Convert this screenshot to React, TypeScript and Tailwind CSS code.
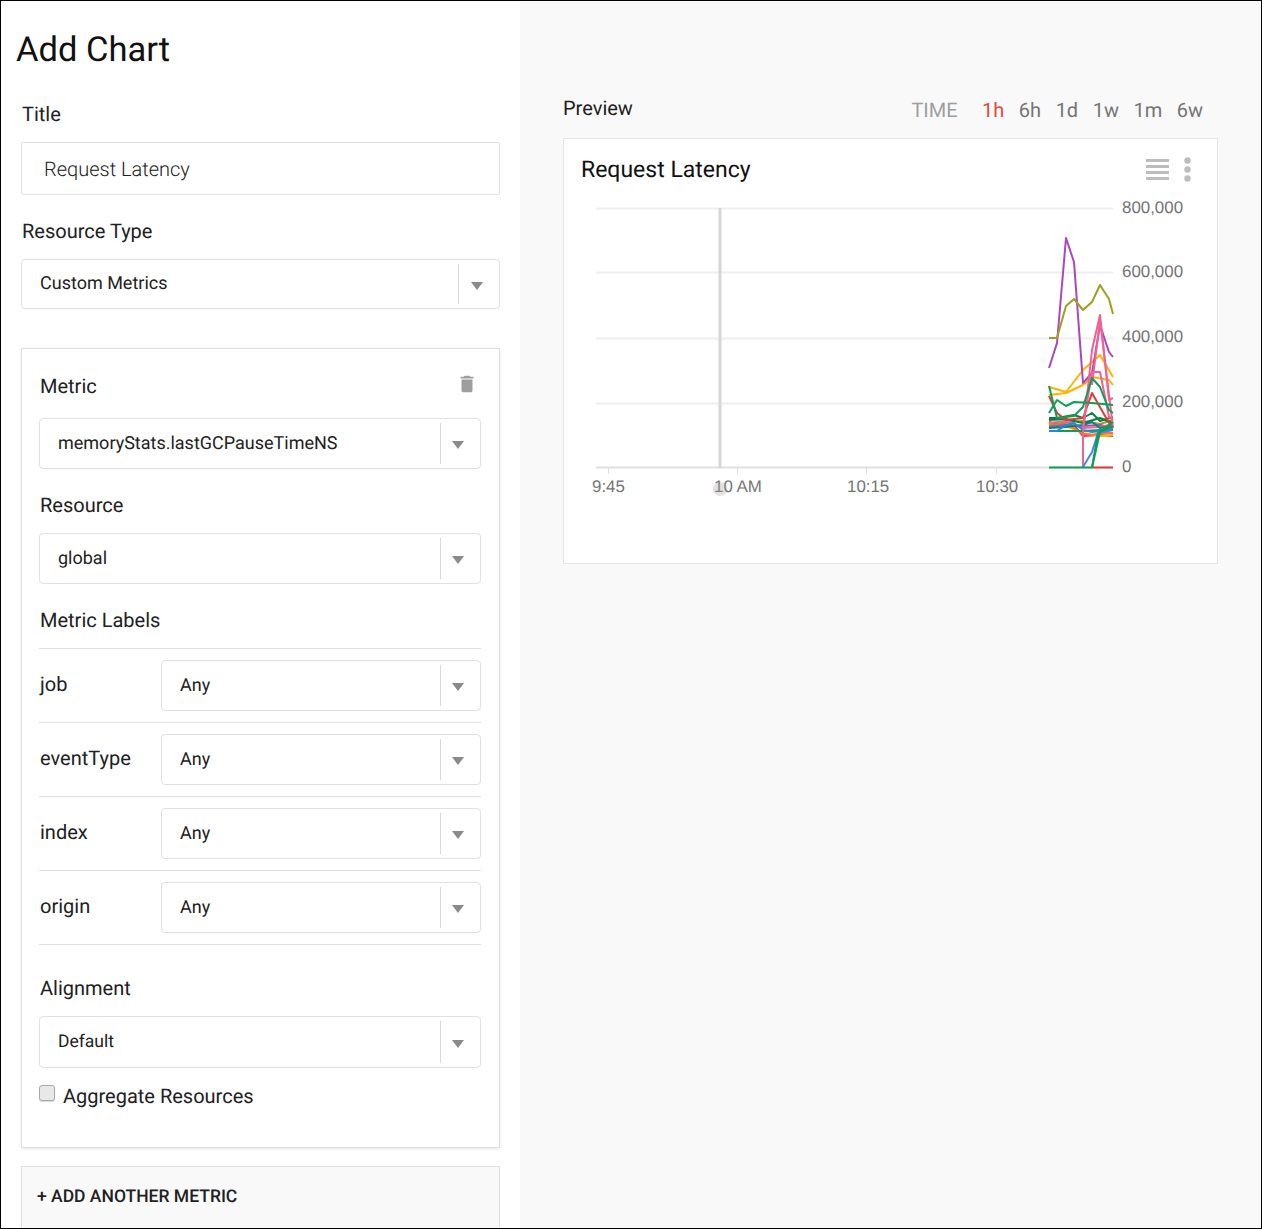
const RANGES = ["1h", "6h", "1d", "1w", "1m", "6w"];
const LABELS = ["job", "eventType", "index", "origin"];

const GRID_Y = [208.5, 272.5, 338.5, 403.5];
const Y_LABELS: [string, number][] = [
  ["800,000", 207],
  ["600,000", 271],
  ["400,000", 336],
  ["200,000", 401],
  ["0", 466],
];
const X_LABELS: [string, number, number][] = [
  ["9:45", 592, 608.5],
  ["10 AM", 714, 737.5],
  ["10:15", 847, 866.5],
  ["10:30", 976, 996.5],
];

// traced by hand from the reference, in page coordinates
const SERIES: [string, string][] = [
  ["#e53935", "1049,422 1057,424 1074,425 1083,436 1100,435 1113,436"],
  ["#ffb300", "1049,424 1066,426 1083,433 1100,436 1113,435"],
  ["#ff7043", "1049,425 1066,424 1074,428 1083,434 1092,435 1100,433 1113,433"],
  ["#9e9d24", "1049,426 1066,422 1083,421 1100,424 1113,420"],
  ["#ab47bc", "1049,427 1066,425 1083,426 1100,425 1113,428"],
  ["#f06292", "1049,423 1066,421 1083,428 1100,427 1113,424"],
  ["#00897b", "1049,428 1066,427 1083,425 1092,422 1100,428 1113,426"],
  ["#0f9d58", "1049,431 1066,431 1083,431 1100,430 1113,429"],
  ["#1e88e5", "1049,431 1057,431 1066,425 1074,423 1083,430 1092,432 1100,431 1113,430"],
  ["#0b8043", "1049,418 1057,418 1074,415 1083,418 1092,413 1100,421 1113,417"],
  ["#0b8043", "1049,420 1066,419 1083,423 1100,418 1113,423"],
  ["#e53935", "1049,396 1057,413 1066,420 1083,418 1092,393 1109,423 1113,426"],
  ["#ffb300", "1049,387 1066,392 1083,370 1100,355 1113,377"],
  ["#ffb300", "1049,395 1066,393 1083,385 1092,377 1109,380 1113,385"],
  ["#ab47bc", "1049,368 1057,343 1066,238 1074,262 1083,383 1092,373 1100,325 1109,352 1113,357"],
  ["#9e9d24", "1049,338 1057,338 1066,306 1074,299 1083,310 1092,302 1100,285 1109,299 1113,314"],
  ["#f06292", "1083,467 1083,433 1092,350 1100,315 1109,400 1113,398"],
  ["#f06292", "1083,427 1092,372 1100,372 1109,417 1113,420"],
  ["#f06292", "1092,385 1100,320 1113,428"],
  ["#0f9d58", "1049,386 1057,418 1074,416 1083,407 1092,378 1100,387 1109,410 1113,413"],
  ["#0f9d58", "1049,413 1057,400 1066,406 1074,402 1092,403 1113,405"],
  ["#4285f4", "1083,467 1092,452 1098,433 1113,430"],
  ["#e53935", "1092,467.5 1113,467.5"],
  ["#0f9d58", "1049,467.5 1092,467.5 1098,433 1113,422"],
  ["#0f9d58", "1092,467.5 1100,432 1113,426"],
];

function Arrow() {
  return (
    <svg width="12" height="8" viewBox="0 0 12 8">
      <path d="M0 0h12L6 8z" fill="#8a8a8a" />
    </svg>
  );
}

function Select({
  value,
  box = "h-[49px] text-[18px]",
  width = "w-full",
  divider = "w-[40px]",
}: {
  value: string;
  box?: string;
  width?: string;
  divider?: string;
}) {
  return (
    <div className={`flex shrink-0 items-stretch rounded-[4px] border border-[#e0e0e0] bg-white ${width}`}>
      <div className={`flex flex-1 items-center pl-[18px] text-[#212121] ${box}`}>{value}</div>
      <div className={`my-[4px] flex items-center justify-center border-l border-[#d8d8d8] pt-[3px] pr-[5px] ${divider}`}>
        <Arrow />
      </div>
    </div>
  );
}

function FieldLabel({ children, className = "" }: { children: string; className?: string }) {
  return <div className={`h-[24px] pl-px text-[20px] leading-[24px] text-[#212121] ${className}`}>{children}</div>;
}

function Chart() {
  return (
    <svg className="mt-[4px] block" width="653" height="373" viewBox="564 190 653 373" fill="none">
      {GRID_Y.map((y) => (
        <line key={y} x1="596" x2="1113" y1={y} y2={y} stroke="#eeeeee" strokeWidth="2" />
      ))}
      <line x1="596" x2="1113" y1="467.5" y2="467.5" stroke="#e0e0e0" strokeWidth="2" />
      {X_LABELS.map(([label, x, tick]) => (
        <g key={label}>
          <line x1={tick} x2={tick} y1="468" y2="474" stroke="#e0e0e0" />
          <text x={x} y="492" fill="#757575" fontSize="16.9" fontFamily="'Liberation Sans', sans-serif">
            {label}
          </text>
        </g>
      ))}
      {Y_LABELS.map(([label, y]) => (
        <text key={label} x="1122" y={y + 6} fill="#757575" fontSize="16.9" fontFamily="'Liberation Sans', sans-serif">
          {label}
        </text>
      ))}
      <line x1="720" x2="720" y1="208" y2="468" stroke="#d6d6d6" strokeWidth="3" />
      <circle cx="720" cy="489" r="7" fill="#9e9e9e" fillOpacity="0.3" />
      {SERIES.map(([color, points], i) => (
        <polyline key={i} points={points} stroke={color} strokeWidth="2" strokeLinejoin="round" />
      ))}
    </svg>
  );
}

export default function App() {
  return (
    <div className="flex h-[1229px] w-[1262px] overflow-hidden border border-black bg-white font-['Roboto',sans-serif] [text-rendering:geometricPrecision]">
      <aside className="w-[519px] shrink-0 px-[20px] pt-[24px]">
        <h1 className="-ml-[5px] h-[48px] pt-px text-[34.5px] leading-[48px] text-[#111111]">Add Chart</h1>

        <FieldLabel className="mt-[29px]">Title</FieldLabel>
        <div className="mt-[16px] flex h-[53px] items-center rounded-[2px] border border-[#e0e0e0] pl-[22px] text-[20px] font-light text-[#212121]">
          Request Latency
        </div>

        <FieldLabel className="mt-[24px]">Resource Type</FieldLabel>
        <div className="mt-[16px]">
          <Select value="Custom Metrics" box="h-[48px] pb-[2px] text-[18px]" divider="w-[41px]" />
        </div>

        <section className="mt-[39px] h-[800px] border border-[#e0e0e0] pl-[17px] pr-[18px] pt-[25px] shadow-[0_1px_3px_rgba(0,0,0,0.1)]">
          <div className="flex items-start justify-between">
            <FieldLabel>Metric</FieldLabel>
            <svg className="-mt-[1px] mr-[3px]" width="22" height="22" viewBox="0 0 24 24" fill="#9e9e9e">
              <path d="M6 19c0 1.1.9 2 2 2h8c1.1 0 2-.9 2-2V7H6v12zM19 4h-3.5l-1-1h-5l-1 1H5v2h14V4z" />
            </svg>
          </div>
          <div className="mt-[20px]">
            <Select value="memoryStats.lastGCPauseTimeNS" />
          </div>

          <FieldLabel className="mt-[24px]">Resource</FieldLabel>
          <div className="mt-[16px]">
            <Select value="global" />
          </div>

          <FieldLabel className="mt-[24px]">Metric Labels</FieldLabel>
          <div className="mt-[16px] border-t border-[#e0e0e0]">
            {LABELS.map((label) => (
              <div key={label} className="flex items-center justify-between border-b border-[#e0e0e0] py-[11px]">
                <span className="pb-[3px] pl-px text-[20px] leading-[24px] text-[#212121]">{label}</span>
                <Select value="Any" width="w-[320px]" />
              </div>
            ))}
          </div>

          <FieldLabel className="mt-[31px]">Alignment</FieldLabel>
          <div className="mt-[16px]">
            <Select value="Default" box="h-[50px] text-[17.5px]" />
          </div>

          <div className="mt-[17px] flex items-start">
            <div className="h-[16px] w-[16px] rounded-[3px] border border-[#a8a8a8] bg-[#e8e8e8] shadow-[0_1px_1px_rgba(0,0,0,0.15)]" />
            <span className="-mt-px ml-[8px] text-[20px] leading-[24px] text-[#212121]">Aggregate Resources</span>
          </div>
        </section>

        <div className="mt-[18px] h-[80px] border border-[#e0e0e0] bg-[#f9f9f9] pl-[15px] pt-[18px] text-[17.5px] font-medium leading-[24px] text-[#212121]">
          + ADD ANOTHER METRIC
        </div>
      </aside>

      <main className="flex-1 bg-[#f9f9f9] pl-[43px] pr-[43px] pt-[95px]">
        <div className="flex h-[24px] items-center justify-between">
          <span className="text-[20px] leading-[24px] text-[#212121]">Preview</span>
          <div className="mr-[15px] mt-[4px] flex items-center text-[20px] leading-[24px] text-[#757575]">
            <span className="mr-[10px] text-[#9e9e9e]">TIME</span>
            {RANGES.map((range) => (
              <span key={range} className={`ml-[14.5px] ${range === "1h" ? "text-[#e04a3a]" : ""}`}>
                {range}
              </span>
            ))}
          </div>
        </div>

        <div className="mt-[18px] h-[426px] w-[655px] border border-[#e6e6e6] bg-white">
          <div className="flex h-[47px] items-end justify-between pl-[17px] pr-[26px]">
            <span className="text-[23px] leading-[32px] text-[#111111]">Request Latency</span>
            <div className="flex items-center gap-[15px] pb-[4px]">
              <svg width="23" height="21" viewBox="0 0 23 21" fill="#bdbdbd">
                <path d="M0 0h23v3H0zM0 6h23v3H0zM0 12h23v3H0zM0 18h23v3H0z" />
              </svg>
              <svg width="7" height="25" viewBox="0 0 7 25" fill="#bdbdbd">
                <circle cx="3.5" cy="3.5" r="3.2" />
                <circle cx="3.5" cy="12.5" r="3.2" />
                <circle cx="3.5" cy="21.5" r="3.2" />
              </svg>
            </div>
          </div>
          <Chart />
        </div>
      </main>
    </div>
  );
}
